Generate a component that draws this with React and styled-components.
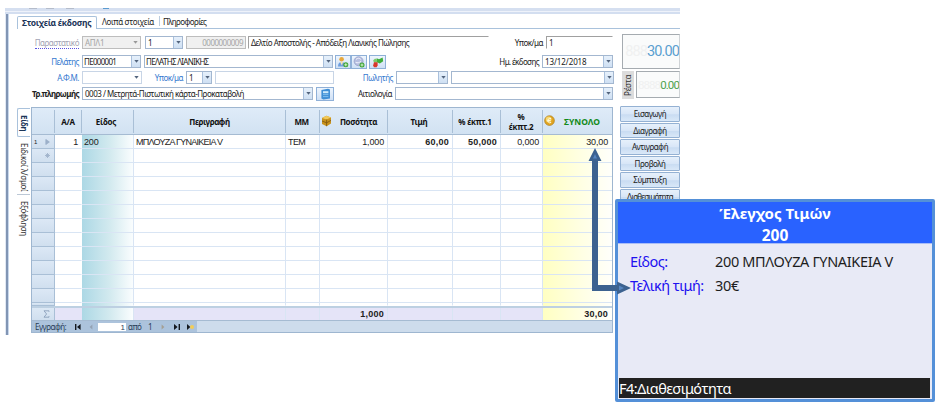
import React from "react";
import styled, { createGlobalStyle, css } from "styled-components";

const Global = createGlobalStyle`
  * { box-sizing: border-box; }
  body { margin: 0; background: #fff; overflow: hidden; }
`;

const ui = `"Noto Sans", "Open Sans", sans-serif`;
const data = `"Liberation Sans", Arial, sans-serif`;

const Stage = styled.div`
  position: relative;
  width: 944px;
  height: 406px;
  padding: 8px 0 0 5px;
  background: #fff;
  font-family: ${ui};
  font-size: 8px;
  line-height: 12px;
  color: #222;
  white-space: nowrap;
`;

const Window = styled.div`
  width: 675px;
  height: 327px;
  display: flex;
  flex-direction: column;
`;

const TitleStrip = styled.div`
  height: 6px;
  flex: none;
  display: flex;
  align-items: flex-start;
  background: linear-gradient(#d5dff0 0 3px, #eef2fa 3px 4px, #d3def0 4px 6px);
`;

const StripMark = styled.i`
  width: ${(p) => p.$w}px;
  height: 1px;
  margin-left: ${(p) => p.$gap}px;
  background: ${(p) => p.$c || "#b4bccb"};
`;

const Frame = styled.div`
  flex: 1;
  min-height: 0;
  display: flex;
  background: linear-gradient(90deg, #e1e8f3 0 1px, #8195b4 1px 3px, #c9d8ec 3px 4px, #fff 4px);
  padding-left: 12px;
  flex-direction: column;
`;

const Tabs = styled.div`
  display: flex;
  height: 15px;
  flex: none;
  padding-top: 2px;
  border-bottom: 1px solid #a9c2dc;
`;

const Tab = styled.div`
  height: ${(p) => (p.$active ? 13 : 10)}px;
  width: ${(p) => p.$w}px;
  padding-left: ${(p) => p.$pad}px;
  line-height: 11px;
  font-size: ${(p) => (p.$active ? 8.5 : 8)}px;
  font-weight: ${(p) => (p.$active ? 700 : 400)};
  color: ${(p) => (p.$active ? "#1c3558" : "#222")};
  letter-spacing: ${(p) => p.$ls || 0}px;
  border-right: ${(p) => (p.$last ? 0 : 1)}px solid #bccde0;
  ${(p) =>
    p.$active &&
    css`
      border: 1px solid #a9c2dc;
      border-bottom: 0;
      background: #fff;
      border-radius: 2px 2px 0 0;
    `}
`;

const Content = styled.div`
  display: grid;
  grid-template-columns: 596px 60px;
  column-gap: 7px;
  flex: 1;
  min-height: 0;
`;

const Left = styled.div`
  display: flex;
  flex-direction: column;
`;

const Form = styled.div`
  display: flex;
  flex-direction: column;
  padding-top: 7px;
  height: 78px;
`;

const FormRow = styled.div`
  display: grid;
  grid-template-columns: ${(p) => p.$cols};
  height: 13px;
  margin-bottom: ${(p) => p.$mb || 3}px;
`;

const Label = styled.div`
  display: flex;
  justify-content: flex-end;
  line-height: 14px;
  padding-right: 3px;
  color: ${(p) => (p.$muted ? "#a3a3b4" : p.$link ? "#3579cf" : "#222")};
  font-weight: ${(p) => (p.$bold ? 700 : 400)};
  letter-spacing: ${(p) => p.$ls ?? -0.5}px;
`;

const Squiggle = styled.span`
  height: 13px;
  border-bottom: 1px dotted #5a52e0;
`;

const Field = styled.div`
  height: 13px;
  display: flex;
  justify-content: space-between;
  border: 1px solid #a3b7d0;
  background: #fff;
  color: #222;
  overflow: hidden;
  ${(p) =>
    p.$disabled &&
    css`
      background: #f0f0f0;
      color: #a5a5a5;
      border-color: #bdbdbd;
    `}
  ${(p) => p.$pale && css`border-color: #c8d5e6;`}
  ${(p) => p.$open && css`border-color: #a0a0a0 transparent transparent #a0a0a0;`}
`;

const Value = styled.span`
  flex: 1;
  min-width: 0;
  padding: 0 2px 0 ${(p) => p.$pl ?? 2}px;
  text-align: ${(p) => (p.$right ? "right" : "left")};
  line-height: 12px;
  letter-spacing: ${(p) => p.$ls ?? -0.5}px;
`;

const DropBox = styled.span`
  width: 9px;
  height: 11px;
  display: flex;
  align-items: center;
  justify-content: center;
  ${(p) =>
    !p.$flat &&
    css`
      background: linear-gradient(#e6f0fb, #cfe0f3);
      border-left: 1px solid #a9c0dc;
    `}
`;

const Drop = ({ flat, color = "#53647d" }) => (
  <DropBox $flat={flat}>
    <svg width="5" height="3" viewBox="0 0 5 3">
      <path d="M0.3 0h4.4L2.5 2.8z" fill={color} />
    </svg>
  </DropBox>
);

const IconButton = styled.div`
  height: 14px;
  display: flex;
  align-items: center;
  justify-content: center;
  border: 1px solid #8fb0d8;
  background: linear-gradient(#eef5fd, #cfe0f5);
`;

const UserAdd = () => (
  <svg width="12" height="12" viewBox="0 0 12 12">
    <circle cx="4.6" cy="3.2" r="2.3" fill="#e8a83c" />
    <path d="M1 10.4c0-3 1.4-4.4 3.6-4.4s3.8 1.4 3.8 4.4z" fill="#6e9ede" />
    <path d="M3.2 6h2.8L4.8 9.4z" fill="#f6e3b4" />
    <circle cx="8.8" cy="8.8" r="2.5" fill="#3fa535" />
    <path d="M8.8 7.3v3M7.3 8.8h3" stroke="#dff5d8" strokeWidth="0.9" />
  </svg>
);
const GlobeAdd = () => (
  <svg width="12" height="12" viewBox="0 0 12 12">
    <circle cx="5.6" cy="5.2" r="4.5" fill="#b7bfe0" stroke="#8f99c6" strokeWidth="0.7" />
    <path d="M3 3.4c1.6-1.6 3.6-1.4 4.8 0M2.6 6.4c2 .8 3.4.4 5.4-1" stroke="#f1f3fc" fill="none" />
    <circle cx="9" cy="9" r="2.5" fill="#3fa535" />
    <path d="M9 7.5v3M7.5 9h3" stroke="#dff5d8" strokeWidth="0.9" />
  </svg>
);
const Swap = () => (
  <svg width="12" height="12" viewBox="0 0 12 12">
    <path d="M4.6 2.2L7 3.2l3.6-1.6.6 3.6-3.4 2.4L4.4 6z" fill="#3fae3a" />
    <path d="M1.2 4.2l2-1.600 2 1.400-.4 2.400-3 .2z" fill="#7cc96b" />
    <path d="M2 6.200h3.600v3l-1 2H1.800l-.6-2z" fill="#d8382c" />
  </svg>
);
const Card = () => (
  <svg width="11" height="12" viewBox="0 0 11 12">
    <path d="M1.4 2L8 .8l2 .8v9L3.4 11.6l-2-1z" fill="#3f8fd6" />
    <path d="M3 3.2h5.4v2H3z" fill="#cdeafc" />
    <path d="M3 6.6h5.4M3 8.6h5.4" stroke="#86c2ee" strokeWidth="0.9" />
  </svg>
);

const GridArea = styled.div`
  display: grid;
  grid-template-columns: 14px 582px;
  height: 226px;
`;

const SideTabs = styled.div`
  display: flex;
  flex-direction: column;
  padding-top: 1px;
`;

const SideTab = styled.div`
  writing-mode: vertical-rl;
  height: ${(p) => p.$h}px;
  width: 13px;
  padding-top: ${(p) => p.$pt}px;
  line-height: 12px;
  letter-spacing: ${(p) => p.$ls || 0}px;
  color: #333;
  border-bottom: ${(p) => (p.$last ? 0 : 1)}px solid #bcc8d6;
  ${(p) =>
    p.$active &&
    css`
      border: 1px solid #a9c2dc;
      border-right: 0;
      border-radius: 2px 0 0 2px;
      font-weight: 700;
      color: #1c3558;
    `}
`;

const Table = styled.div`
  border: 1px solid #9eb6d0;
  display: flex;
  flex-direction: column;
  background: #fff;
`;

const columns = "23px 27px 52px 152px 34px 68px 65px 48px 42px 1fr";

const HeadRow = styled.div`
  display: grid;
  grid-template-columns: ${columns};
  height: 27px;
  flex: none;
  background: linear-gradient(#dfebf8, #d2e2f2);
  border-bottom: 1px solid #a5bbd2;
`;

const Head = styled.div`
  display: flex;
  align-items: center;
  justify-content: center;
  text-align: center;
  position: relative;
  margin: 2px 0 1px;
  border-right: 1px solid #a9bfd6;
  font-weight: 700;
  font-size: ${(p) => p.$fs || 8}px;
  line-height: 10px;
  letter-spacing: ${(p) => p.$ls ?? -0.25}px;
  color: ${(p) => p.$color || "#111"};
  padding-left: ${(p) => p.$pl || 0}px;
  padding-right: ${(p) => p.$pr || 0}px;
  white-space: pre-line;
  &:last-child { border-right: 0; }
`;

const HeadIcon = styled.svg`
  position: absolute;
  left: 1px;
  top: 5px;
`;

const BodyRow = styled.div`
  display: grid;
  grid-template-columns: ${columns};
  height: ${(p) => p.$h || 14}px;
  flex: none;
`;

const Cell = styled.div`
  border-right: 1px solid #d9e5f4;
  border-bottom: 1px solid ${(p) => (p.$noline ? "transparent" : "#d9e5f4")};
  font-family: ${data};
  font-size: 9px;
  line-height: 14px;
  letter-spacing: ${(p) => p.$ls ?? (p.$bold ? 0.25 : -0.15)}px;
  text-align: ${(p) => (p.$right ? "right" : "left")};
  padding: 0 3px 0 2px;
  font-weight: ${(p) => (p.$bold ? 700 : 400)};
  color: #222;
  overflow: hidden;
  &:nth-child(1) {
    background: linear-gradient(#dce8f5, #d0dfef);
    border-color: #a9bfd6;
    display: flex;
    align-items: center;
    justify-content: space-between;
    padding-right: 4px;
    font-size: 6px;
  }
  &:nth-child(2) { border-right-color: transparent; }
  &:nth-child(3) {
    background: linear-gradient(90deg, #acd8e5, #d3eaef 55%, #fafdfe);
  }
  &:nth-child(10) {
    background: linear-gradient(90deg, #ffffc2, #ffffe0 50%, #fffffb);
    border-right: 0;
    padding-right: 4px;
  }
`;

const TotalRow = styled(BodyRow)`
  height: 14px;
  border-top: 2px solid #bdd0e2;
  background: #e5e4f8;
  ${Cell} { border-bottom: 0; line-height: 13px; }
`;

const Navigator = styled.div`
  flex: 1;
  display: flex;
  align-items: center;
  background: linear-gradient(90deg, #acc3dc 0 165px, #cddcec 165px);
  border-top: 1px solid #a5bbd2;
  color: #2a3d58;
  padding-left: 3px;
  line-height: 10px;
`;

const NavText = styled.span`
  width: ${(p) => p.$w}px;
  letter-spacing: ${(p) => p.$ls || 0}px;
`;

const NavInput = styled.span`
  width: 28px;
  height: 8px;
  background: #fff;
  text-align: right;
  font: 8px/9px ${data};
  padding-right: 1px;
  margin-right: 2px;
`;

const NavIcons = styled.svg`
  margin-right: ${(p) => p.$mr || 0}px;
`;

const Right = styled.div`
  display: flex;
  flex-direction: column;
  padding: 5px 0 0;
`;

const TotalDisplay = styled.div`
  display: flex;
  height: 36px;
  flex: none;
  margin-left: 2px;
`;

const Lcd = styled.div`
  height: ${(p) => p.$h}px;
  flex: 1;
  border: 1px solid #a5abb0;
  border-right-color: #cfd3d6;
  background: #fafbfb;
  display: flex;
  justify-content: flex-end;
  align-items: center;
  overflow: hidden;
  font-family: "Roboto", sans-serif;
  font-weight: 400;
  font-size: ${(p) => p.$fs}px;
  letter-spacing: ${(p) => p.$ls}px;
  color: ${(p) => p.$c};
`;

const Ghost = styled.span`
  color: #f0f1f1;
`;

const ChangeRow = styled.div`
  display: flex;
  height: 28px;
  margin: 1px 0 7px 2px;
`;

const ChangeLabel = styled.div`
  writing-mode: vertical-rl;
  transform: rotate(180deg);
  width: 12px;
  margin-right: 2px;
  background: #dcdcdc;
  text-align: center;
  line-height: 12px;
  letter-spacing: -0.2px;
  color: #333;
`;

const ActionButton = styled.div`
  height: 15.5px;
  margin-bottom: 1px;
  flex: none;
  border: 1px solid #94b1d3;
  border-radius: 1px;
  background: linear-gradient(#e6f0fb 0%, #d8e6f7 50%, #c9dcf2 55%, #d9e8f8 100%);
  text-align: center;
  line-height: 14px;
  letter-spacing: ${(p) => p.$ls ?? -0.45}px;
`;

const Popup = styled.div`
  position: absolute;
  left: 615px;
  top: 199px;
  width: 320px;
  height: 203px;
  border: 3px solid #5490d8;
  border-radius: 2px;
  background: #e8eaf6;
  display: flex;
  flex-direction: column;
`;

const PopupTitle = styled.div`
  height: 42px;
  background: #2962ff;
  border-bottom: 1px solid #a9bdf7;
  color: #fff;
  font-weight: 700;
  font-size: 15px;
  line-height: 22px;
  text-align: center;
`;

const PopupCode = styled.div`
  font-size: 15.5px;
`;

const PopupBody = styled.div`
  flex: 1;
  display: grid;
  grid-template-columns: 85px 1fr;
  grid-auto-rows: 23.5px;
  padding: 6px 0 0 12px;
  font-size: 14.5px;
  line-height: 23px;
`;

const PopupKey = styled.span`
  color: #1d12f0;
  letter-spacing: -0.55px;
`;

const PopupValue = styled.span`
  color: #1d1d1d;
  letter-spacing: -0.35px;
`;

const PopupFooter = styled.div`
  height: 20px;
  margin: 0 2px 1px 1px;
  background: #212121;
  color: #fff;
  font-size: 14.5px;
  line-height: 20px;
  letter-spacing: -0.53px;
`;

const Connector = styled.svg`
  position: absolute;
  left: 585px;
  top: 144px;
`;

const blankRows = Array.from({ length: 10 }, (_, i) => i);
const blankCells = Array.from({ length: 9 }, (_, i) => i);

export default function App() {
  return (
    <Stage>
      <Global />
      <Window>
        <TitleStrip>
          <StripMark $gap={24} $w={8} />
          <StripMark $gap={9} $w={8} />
          <StripMark $gap={12} $w={8} />
          <StripMark $gap={29} $w={6} $c="#5b9bd0" />
        </TitleStrip>
        <Frame>
          <Tabs>
            <Tab $active $w={80} $pad={4} $ls={-0.28}>Στοιχεία έκδοσης</Tab>
            <Tab $w={63} $pad={5} $ls={-0.3}>Λοιπά στοιχεία</Tab>
            <Tab $last $w={60} $pad={3} $ls={-0.6}>Πληροφορίες</Tab>
          </Tabs>
          <Content>
            <Left>
              <Form>
                <FormRow $mb={6} $cols="65px 59px 4px 38px 3px 60px 2px 241px 57px 67px">
                  <Label $muted><Squiggle>Παραστατικό</Squiggle></Label>
                  <Field $disabled><Value $ls={-0.3}>ΑΠΛ1</Value><Drop flat color="#999" /></Field>
                  <span />
                  <Field><Value>1</Value><Drop /></Field>
                  <span />
                  <Field $disabled><Value $right>0000000009</Value></Field>
                  <span />
                  <Field $open><Value>Δελτίο Αποστολής - Απόδειξη Λιανικής Πώλησης</Value></Field>
                  <Label>Υποκ/μα</Label>
                  <Field $open><Value>1</Value></Field>
                </FormRow>
                <FormRow $cols="65px 59px 3px 189px 2px 16px 16px 2px 17px 156px 71px">
                  <Label $link>Πελάτης</Label>
                  <Field><Value $pl={1} $ls={-0.7}>ΠΕ000001</Value><Drop /></Field>
                  <span />
                  <Field><Value $pl={1} $ls={-0.7}>ΠΕΛΑΤΗΣ ΛΙΑΝΙΚΗΣ</Value><Drop /></Field>
                  <span />
                  <IconButton><UserAdd /></IconButton>
                  <IconButton><GlobeAdd /></IconButton>
                  <span />
                  <IconButton><Swap /></IconButton>
                  <Label $ls={-0.6}>Ημ. έκδοσης</Label>
                  <Field><Value $ls={-0.1}>13/12/2018</Value><Drop /></Field>
                </FormRow>
                <FormRow $cols="65px 60px 44px 26px 3px 119px 62px 52px 3px 163px">
                  <Label $link>Α.Φ.Μ.</Label>
                  <Field $pale><Value /><Drop flat /></Field>
                  <Label $link>Υποκ/μα</Label>
                  <Field><Value>1</Value><Drop /></Field>
                  <span />
                  <Field $pale />
                  <Label $link>Πωλητής</Label>
                  <Field><Value /><Drop /></Field>
                  <span />
                  <Field><Value /><Drop /></Field>
                </FormRow>
                <FormRow $cols="65px 231px 3px 18px 61px 218px">
                  <Label $bold $ls={-0.6}>Τρ.πληρωμής</Label>
                  <Field><Value>0003 / Μετρητά-Πιστωτική κάρτα-Προκαταβολή</Value><Drop /></Field>
                  <span />
                  <IconButton><Card /></IconButton>
                  <Label>Αιτιολογία</Label>
                  <Field><Value /><Drop /></Field>
                </FormRow>
              </Form>
              <GridArea>
                <SideTabs>
                  <SideTab $active $h={29} $pt={6} $ls={-0.3}>Είδη</SideTab>
                  <SideTab $h={58} $pt={6} $ls={-0.3}>Ειδικοί λ/σμοί</SideTab>
                  <SideTab $last $h={50} $pt={6} $ls={-0.35}>Εξόφληση</SideTab>
                </SideTabs>
                <Table>
                  <HeadRow>
                    <Head />
                    <Head>Α/Α</Head>
                    <Head $pr={3}>Είδος</Head>
                    <Head $ls={-0.45}>Περιγραφή</Head>
                    <Head $pr={2} $ls={-0.5}>ΜΜ</Head>
                    <Head $pl={10} $ls={-0.35}>
                      <HeadIcon width="11" height="12" viewBox="0 0 11 12">
                        <path d="M1 3L5.4.8 10 2.4v6L5.6 11.2 1 9z" fill="#c8921c" />
                        <path d="M1 3l4.6 1.6L10 2.4 5.4.8z" fill="#f1c95a" />
                        <path d="M5.6 4.6v6.6M1 6l4.6 1.8L10 5.4" stroke="#7b5410" strokeWidth="0.8" fill="none" />
                      </HeadIcon>
                      Ποσότητα
                    </Head>
                    <Head $pr={2}>Τιμή</Head>
                    <Head $pr={3}>% έκπτ.1</Head>
                    <Head $pr={1}>{"%\nέκπτ.2"}</Head>
                    <Head $pl={9} $fs={8.5} $ls={0} $color="#138a1b">
                      <HeadIcon width="11" height="12" viewBox="0 0 11 12">
                        <circle cx="5.5" cy="5.6" r="4.9" fill="#e0a421" stroke="#a87511" strokeWidth="0.6" />
                        <circle cx="4.6" cy="4.4" r="2.8" fill="#f6d770" />
                        <path d="M7.2 3.8a2.2 2.2 0 1 0 0 3.6M3.8 5.6h2.8" stroke="#fffbe4" strokeWidth="1" fill="none" />
                      </HeadIcon>
                      ΣΥΝΟΛΟ
                    </Head>
                  </HeadRow>
                  <BodyRow>
                    <Cell>
                      1
                      <svg width="5" height="6" viewBox="0 0 5 6"><path d="M.8.4v5.2L4.4 3z" fill="#9fb2cb" stroke="#8fa5c1" strokeWidth="0.6" /></svg>
                    </Cell>
                    <Cell $right>1</Cell>
                    <Cell>200</Cell>
                    <Cell $ls={-0.75}>ΜΠΛΟΥΖΑ ΓΥΝΑΙΚΕΙΑ V</Cell>
                    <Cell $ls={-0.6}>ΤΕΜ</Cell>
                    <Cell $right>1,000</Cell>
                    <Cell $right $bold>60,00</Cell>
                    <Cell $right $bold>50,000</Cell>
                    <Cell $right>0,000</Cell>
                    <Cell $right>30,00</Cell>
                  </BodyRow>
                  <BodyRow>
                    <Cell>
                      <span />
                      <svg width="5" height="5" viewBox="0 0 5 5"><path d="M2.5 0v5M0 2.5h5M.8.8l3.4 3.4M4.2.8L.8 4.2" stroke="#9fb2cb" strokeWidth="0.9" /></svg>
                    </Cell>
                    {blankCells.map((c) => <Cell key={c} />)}
                  </BodyRow>
                  {blankRows.map((r) => (
                    <BodyRow key={r}>
                      <Cell />
                      {blankCells.map((c) => <Cell key={c} />)}
                    </BodyRow>
                  ))}
                  <BodyRow $h={3}>
                    <Cell $noline />
                    {blankCells.map((c) => <Cell $noline key={c} />)}
                  </BodyRow>
                  <TotalRow>
                    <Cell>
                      <span />
                      <svg width="7" height="8" viewBox="0 0 7 8"><path d="M6 1.8V.8H1L3.6 4 1 7.2h5v-1" stroke="#8499b5" strokeWidth="0.8" fill="none" /></svg>
                    </Cell>
                    <Cell />
                    <Cell />
                    <Cell />
                    <Cell />
                    <Cell $right $bold>1,000</Cell>
                    <Cell />
                    <Cell />
                    <Cell />
                    <Cell $right $bold>30,00</Cell>
                  </TotalRow>
                  <Navigator>
                    <NavText $w={39} $ls={-0.5}>Εγγραφή:</NavText>
                    <NavIcons width="8" height="6" viewBox="0 0 8 6" $mr={7}><path d="M1 0h1.4v6H1zM6.600 0v6L3 3z" fill="#14191f" /></NavIcons>
                    <NavIcons width="4" height="6" viewBox="0 0 4 6" $mr={5}><path d="M3.4.6v4.8L.6 3z" fill="#94a2b4" /></NavIcons>
                    <NavInput>1</NavInput>
                    <NavText $w={20} $ls={-0.5}>από</NavText>
                    <NavText $w={13}>1</NavText>
                    <NavIcons width="4" height="6" viewBox="0 0 4 6" $mr={8}><path d="M.6.6v4.8L3.4 3z" fill="#a49f92" /></NavIcons>
                    <NavIcons width="8" height="6" viewBox="0 0 8 6" $mr={5}><path d="M5.6 0H7v6H5.6zM1 0v6l3.6-3z" fill="#14191f" /></NavIcons>
                    <NavIcons width="9" height="6" viewBox="0 0 9 6"><path d="M1 0v6l3.4-3z" fill="#14191f" /><circle cx="6" cy="3" r="2" fill="#f2cd57" /></NavIcons>
                  </Navigator>
                </Table>
              </GridArea>
            </Left>
            <Right>
              <TotalDisplay>
                <Lcd $h={35} $fs={14.5} $ls={-0.9} $c="#5a9fd0"><Ghost>888</Ghost>30.00</Lcd>
              </TotalDisplay>
              <ChangeRow>
                <ChangeLabel>Ρέστα</ChangeLabel>
                <Lcd $h={27} $fs={11.5} $ls={-0.9} $c="#4fa24f"><Ghost>8888</Ghost>0.00</Lcd>
              </ChangeRow>
              <ActionButton>Εισαγωγή</ActionButton>
              <ActionButton>Διαγραφή</ActionButton>
              <ActionButton>Αντιγραφή</ActionButton>
              <ActionButton>Προβολή</ActionButton>
              <ActionButton>Σύμπτυξη</ActionButton>
              <ActionButton $ls={-0.75}>Διαθεσιμότητα</ActionButton>
            </Right>
          </Content>
        </Frame>
      </Window>
      <Popup>
        <PopupTitle>
          <div>Έλεγχος Τιμών</div>
          <PopupCode>200</PopupCode>
        </PopupTitle>
        <PopupBody>
          <PopupKey>Είδος:</PopupKey>
          <PopupValue>200 ΜΠΛΟΥΖΑ ΓΥΝΑΙΚΕΙΑ V</PopupValue>
          <PopupKey>Τελική τιμή:</PopupKey>
          <PopupValue>30€</PopupValue>
        </PopupBody>
        <PopupFooter>F4:Διαθεσιμότητα</PopupFooter>
      </Popup>
      <Connector width="52" height="152" viewBox="0 0 52 152">
        <path d="M10 16V144H34" fill="none" stroke="#3c6290" strokeWidth="6" />
        <path d="M3.5 17L10 4l6.5 13zM32 137.5l14 6.5-14 6.5z" fill="#3c6290" />
        <path d="M8 14.5L10 10l2 4.5zM34 141.5l5 2.5-5 2.5z" fill="#5585c0" />
      </Connector>
    </Stage>
  );
}
